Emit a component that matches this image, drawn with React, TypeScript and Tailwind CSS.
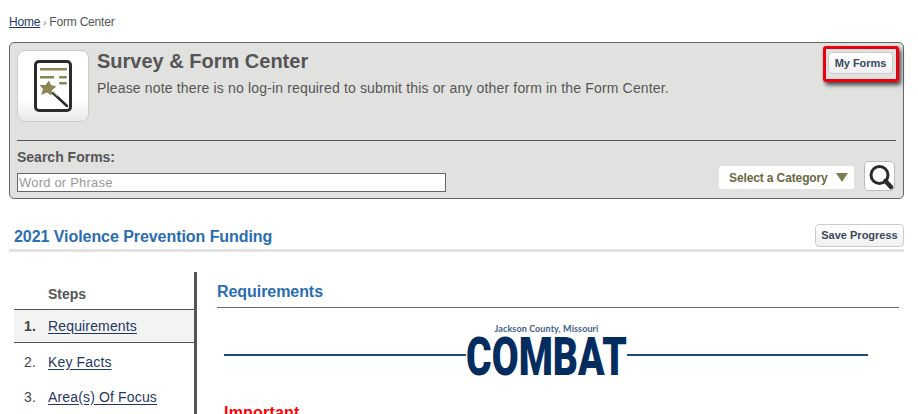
function FormIcon() {
  return (
    <svg width="46" height="56" viewBox="0 0 46 56" aria-hidden>
      <rect x="2.500" y="3.500" width="35" height="49" rx="3.500" fill="#fff" stroke="#2b2b2b" strokeWidth="3" />
      <rect x="7" y="10" width="27" height="2.500" fill="#8a8755" />
      <rect x="7" y="18" width="14" height="2.500" fill="#8a8755" />
      <rect x="26" y="18" width="8" height="2.500" rx="1" fill="#8a8755" />
      <rect x="26" y="24" width="8" height="2.500" rx="1" fill="#8a8755" />
      <polygon
        points="16,22.500 18,27 23.500,28.500 19,32 18.500,37.500 14,34.500 8,37 10,31 6.500,27 12.500,27"
        fill="#8a8755"
      />
      <line x1="20" y1="35" x2="34" y2="48" stroke="#2b2b2b" strokeWidth="2.500" strokeLinecap="round" />
      <line x1="20" y1="33.500" x2="25" y2="38" stroke="#c4c4c4" strokeWidth="1.500" />
    </svg>
  )
}

function SearchIcon() {
  return (
    <svg width="29" height="28" viewBox="0 0 29 28" aria-hidden>
      <circle cx="14.500" cy="13" r="8.500" fill="none" stroke="#2b2b2b" strokeWidth="3" />
      <line x1="20.500" y1="19" x2="26" y2="25" stroke="#2b2b2b" strokeWidth="4.500" strokeLinecap="round" />
    </svg>
  )
}

function Steps() {
  return (
    <div className="w-[183px] shrink-0 border-r-[3px] border-[#555] ml-[5px] h-[143px]">
      <div className="h-[38px] border-b border-[#555] pl-[34px] pt-[14px] text-[14px] leading-[16px] font-bold text-[#555]">
        Steps
      </div>
      <div className="h-[33px] flex items-center bg-[#f3f3f1] border-b border-[#555] text-[14px] tracking-[0.15px]">
        <span className="w-[34px] pl-[10px] font-bold text-[#444]">1.</span>
        <a className="text-[#1f3864] underline underline-offset-2">Requirements</a>
      </div>
      <div className="h-[36px] mt-[1px] flex items-center text-[14px] tracking-[0.15px]">
        <span className="w-[34px] pl-[10px] text-[#444]">2.</span>
        <a className="text-[#1f3864] underline underline-offset-2">Key Facts</a>
      </div>
      <div className="h-[34px] flex items-center text-[14px] tracking-[0.15px]">
        <span className="w-[34px] pl-[10px] text-[#444]">3.</span>
        <a className="text-[#1f3864] underline underline-offset-2">Area(s) Of Focus</a>
      </div>
    </div>
  )
}

function CombatLogo() {
  return (
    <div className="flex items-end mt-[16px] ml-[7px] w-[644px] h-[54px]">
      <div className="h-[2px] w-[242px] mb-[22px] bg-[#1f4a7d]" />
      <div className="w-[161px] shrink-0 flex flex-col items-center">
        <div className="h-[10px] text-[9px] leading-[10px] font-bold tracking-[0.1px] text-[#3f5f85] whitespace-nowrap font-['Lato',sans-serif]">
          Jackson County, Missouri
        </div>
        <div className="h-[42px] mt-[2px] text-[39px] leading-[42px] font-black text-[#032c5f] scale-y-[1.37] whitespace-nowrap font-['Roboto',sans-serif]">
          COMBAT
        </div>
      </div>
      <div className="h-[2px] flex-1 mb-[22px] bg-[#1f4a7d]" />
    </div>
  )
}

export default function App() {
  return (
    <div className="relative w-[918px] h-[414px] overflow-hidden bg-white font-['Liberation_Sans',Arial,sans-serif]">
      <div className="pl-[9px] pt-[15px] h-[42px] text-[12px] leading-[14px] tracking-[-0.2px] text-[#555]">
        <a className="text-[#1f3864] underline">Home</a> <span className="text-[9px]">›</span> Form Center
      </div>

      <div className="relative ml-[9px] w-[895px] h-[157px] bg-[#e1e1e0] border border-[#666] rounded-[5px] px-[7px] pt-[7px]">
        <div className="flex h-[91px] border-b border-[#555]">
          <div className="w-[72px] h-[72px] shrink-0 flex items-center justify-center rounded-[8px] border border-[#ccc] bg-gradient-to-b from-white from-70% to-[#e8e8e8] pl-[6px]">
            <FormIcon />
          </div>
          <div className="ml-[8px]">
            <h1 className="text-[20px] leading-[23px] font-bold text-[#555]">Survey &amp; Form Center</h1>
            <p className="text-[14px] leading-[16px] mt-[7px] tracking-[0.16px] text-[#555]">
              Please note there is no log-in required to submit this or any other form in the Form Center.
            </p>
          </div>
          <button className="ml-auto mr-[3px] mt-[2px] h-[22px] w-[65px] bg-gradient-to-b from-white to-[#f0f0f0] border border-[#ccc] rounded-[4px] text-[11px] tracking-[-0.05px] font-bold text-[#3a4a5f]">
            My Forms
          </button>
        </div>

        <div className="flex">
          <div className="w-[429px]">
            <div className="text-[14px] leading-[16px] mt-[8px] font-bold text-[#555]">Search Forms:</div>
            <input
              className="block w-[429px] h-[19px] mt-[8px] bg-white border border-[#666] px-[1px] text-[13px] leading-[15px] tracking-[0.2px] placeholder:text-[#999] outline-none"
              placeholder="Word or Phrase"
            />
          </div>
          <div className="ml-auto flex items-start">
            <div className="mt-[25px] w-[135px] h-[23px] bg-white rounded-[3px] flex items-center pl-[10px] text-[12px] tracking-[-0.12px] font-bold text-[#6b6843]">
              Select a Category
              <span className="ml-[8px] w-0 h-0 border-l-[6px] border-r-[6px] border-t-[9px] border-l-transparent border-r-transparent border-t-[#7d7c50]" />
            </div>
            <button className="mt-[20px] ml-[10px] mr-[1px] w-[31px] h-[30px] bg-white border border-[#bbb] rounded-[5px] flex items-center justify-center">
              <SearchIcon />
            </button>
          </div>
        </div>
      </div>

      <div className="relative ml-[9px] w-[895px] h-[53px] border-b-[3px] border-[#e2e2e2]">
        <h2 className="absolute left-[5px] top-[28px] text-[16px] leading-[19px] tracking-[-0.06px] font-bold text-[#2a6db0]">
          2021 Violence Prevention Funding
        </h2>
        <button className="absolute right-0 top-[25px] w-[89px] h-[23px] bg-gradient-to-b from-white to-[#f0f0f0] border border-[#ccc] rounded-[4px] text-[11px] font-bold text-[#3a4a5f]">
          Save Progress
        </button>
      </div>

      <div className="flex mt-[20px] ml-[9px]">
        <Steps />
        <div className="flex-1 pl-[20px] pr-[19px]">
          <h3 className="h-[36px] border-b border-[#666] pt-[11px] text-[16px] leading-[18px] tracking-[-0.06px] font-bold text-[#2a6db0] w-[682px]">
            Requirements
          </h3>
          <CombatLogo />
          <div className="ml-[7px] mt-[26px] text-[16px] leading-[18px] tracking-[0.2px] font-bold text-[#f00]">Important</div>
        </div>
      </div>

      {/* Red highlight round the My Forms button */}
      <div className="absolute left-[823px] top-[46px] w-[76px] h-[36px] border-[3px] border-[#e8000d] rounded-[3px] shadow-[2px_3px_4px_rgba(0,0,0,0.7)]" />
    </div>
  )
}
